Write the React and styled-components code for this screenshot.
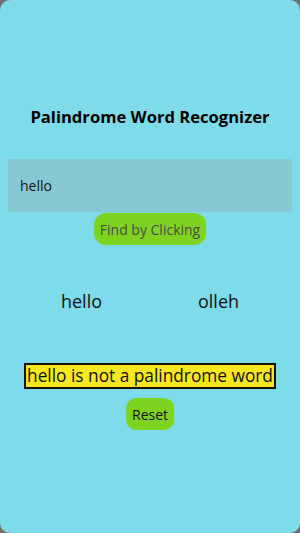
import React, { useState } from "react";
import styled, { createGlobalStyle } from "styled-components";

const GlobalStyle = createGlobalStyle`
    html, body {
        margin: 0;
        padding: 0;
        background-color: #6f6f6f;
    }
    body {
        font-family: "Open Sans", "Noto Sans", sans-serif;
    }
`

const App = () => {
    const [word, setWord] = useState("hello");
    const [checked, setChecked] = useState(true);
    const reversed = word.split("").reverse().join("");
    const isPalindrome = word === reversed;

    return (
        <>
            <GlobalStyle />
            <Card>
                <Title>Palindrome Word Recognizer</Title>
                <Input
                    type="text"
                    value={word}
                    onChange={(e) => { setWord(e.target.value); setChecked(false); }}
                />
                <FindButton onClick={() => setChecked(true)}>Find by Clicking</FindButton>
                <Words>
                    <Word>{checked ? word : ""}</Word>
                    <Word>{checked ? reversed : ""}</Word>
                </Words>
                <Result>
                    {word} is {isPalindrome ? "" : "not "}a palindrome word
                </Result>
                <ResetButton onClick={() => { setWord(""); setChecked(false); }}>Reset</ResetButton>
            </Card>
        </>
    );
};

export default App;

const Card = styled.div`
    height: 533px;
    width: 300px;
    box-sizing: border-box;
    background-color: #7ddbea;
    border-radius: 10px;
    display: flex;
    flex-direction: column;
    align-items: center;
    padding: 105px 8px 0;
`
const Title = styled.h1`
    margin: 0 0 31px;
    font-size: 16.6px;
    font-weight: bold;
    color: #000;
`
const Input = styled.input`
    width: 100%;
    height: 53px;
    box-sizing: border-box;
    border: none;
    outline: none;
    background-color: #88c8d2;
    padding: 0 12px;
    font-family: inherit;
    font-size: 14px;
    color: #111;
`
const FindButton = styled.button`
    margin-top: 1px;
    height: 32px;
    padding: 0 6px;
    border: none;
    border-radius: 12px;
    background-color: #7ed321;
    color: #4a4a4a;
    font-family: inherit;
    font-size: 14px;
`
const Words = styled.div`
    margin-top: 44px;
    display: flex;
    justify-content: center;
    gap: 96px;
`
const Word = styled.p`
    margin: 0;
    font-size: 18px;
    color: #111;
`
const Result = styled.p`
    margin: 50px 0 0;
    border: 2px solid #111;
    background-color: #f8e71c;
    padding: 0 1px;
    font-size: 17.3px;
    line-height: 22px;
    color: #111;
`
const ResetButton = styled.button`
    margin-top: 9px;
    height: 32px;
    padding: 0 6px;
    border: none;
    border-radius: 10px;
    background-color: #7ed321;
    color: #111;
    font-family: inherit;
    font-size: 14px;
`
